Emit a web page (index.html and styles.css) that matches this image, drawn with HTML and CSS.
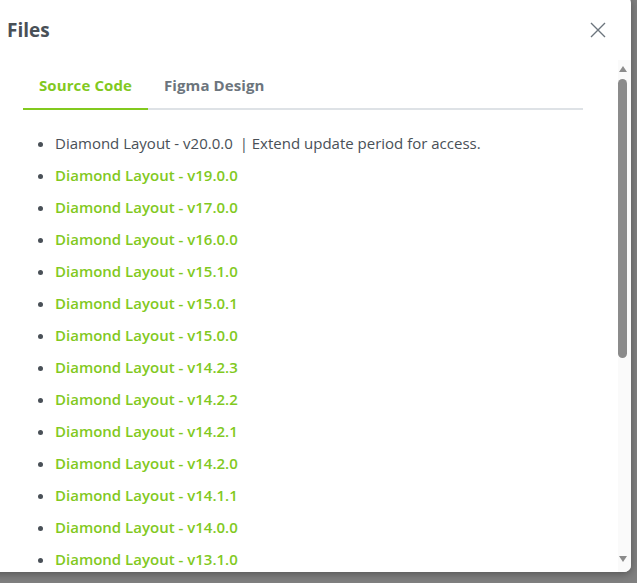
FILE: index.html
```html
<!DOCTYPE html>
<html lang="en">
<head>
    <meta charset="UTF-8">
    <meta name="viewport" content="width=device-width, initial-scale=1.0">
    <title>Files</title>
    <link rel="stylesheet" href="styles.css">
</head>
<body>
    <!-- Files dialog over the dimmed page -->
    <div class="dialog">
        <div class="dialog-header">
            <span class="dialog-title">Files</span>
            <button class="dialog-close" aria-label="Close">
                <svg width="16" height="16" viewBox="0 0 16 16">
                    <path d="M1 1 L15 15 M15 1 L1 15" stroke="#6c757d" stroke-width="1.4" fill="none"/>
                </svg>
            </button>
        </div>

        <div class="dialog-body">
            <div class="dialog-content">
                <div class="tabs">
                    <a class="tab active">Source Code</a>
                    <a class="tab">Figma Design</a>
                </div>

                <ul class="file-list">
                    <li class="muted">Diamond Layout - v20.0.0 <span class="sep">|</span> Extend update period for access.</li>
                    <li><a>Diamond Layout - v19.0.0</a></li>
                    <li><a>Diamond Layout - v17.0.0</a></li>
                    <li><a>Diamond Layout - v16.0.0</a></li>
                    <li><a>Diamond Layout - v15.1.0</a></li>
                    <li><a>Diamond Layout - v15.0.1</a></li>
                    <li><a>Diamond Layout - v15.0.0</a></li>
                    <li><a>Diamond Layout - v14.2.3</a></li>
                    <li><a>Diamond Layout - v14.2.2</a></li>
                    <li><a>Diamond Layout - v14.2.1</a></li>
                    <li><a>Diamond Layout - v14.2.0</a></li>
                    <li><a>Diamond Layout - v14.1.1</a></li>
                    <li><a>Diamond Layout - v14.0.0</a></li>
                    <li><a>Diamond Layout - v13.1.0</a></li>
                </ul>
            </div>

            <!-- scrollbar of the list -->
            <div class="scrollbar">
                <div class="scroll-arrow up"></div>
                <div class="scroll-track">
                    <div class="scroll-thumb"></div>
                </div>
                <div class="scroll-arrow down"></div>
            </div>
        </div>
    </div>
</body>
</html>
```

FILE: styles.css
```css
/* Base */
* {
    margin: 0;
    padding: 0;
    box-sizing: border-box;
}

body {
    height: 583px;
    overflow: hidden;
    background: #808080;
    font-family: "Open Sans", "Noto Sans", sans-serif;
    color: #495057;
}

/* Dialog box */
.dialog {
    display: flex;
    flex-direction: column;
    width: 643px;
    height: 576px;
    margin-top: -4px;
    margin-left: -12px;
    background: #fff;
    border-radius: 7px;
    overflow: hidden;
    box-shadow: 0 2px 8px rgba(0, 0, 0, 0.35);
}

.dialog-header {
    display: flex;
    justify-content: space-between;
    align-items: center;
    height: 64px;
    padding: 4px 17px 0 19px;
}

.dialog-title {
    font-size: 19px;
    font-weight: 700;
    color: #495057;
}

.dialog-close {
    display: flex;
    align-items: center;
    justify-content: center;
    width: 32px;
    height: 32px;
    border: none;
    background: transparent;
}

/* Body: list + scrollbar */
.dialog-body {
    display: flex;
    flex: 1;
    min-height: 0;
}

.dialog-content {
    flex: 1;
    overflow: hidden;
    padding: 0 35px;
}

.scrollbar {
    display: flex;
    flex-direction: column;
    width: 13px;
    background: #fafafa;
}

.scroll-arrow {
    height: 18px;
    display: flex;
    justify-content: center;
    align-items: center;
    padding-right: 4px;
}

.scroll-arrow::before {
    content: '';
    border-left: 4.5px solid transparent;
    border-right: 4.5px solid transparent;
}

.scroll-arrow.up::before {
    border-bottom: 6px solid #8b8b8b;
}

.scroll-arrow.down::before {
    border-top: 6px solid #8b8b8b;
    margin-bottom: 8px;
}

.scroll-track {
    flex: 1;
    padding: 1px 4px 0 0;
}

.scroll-thumb {
    height: 279px;
    background: #8b8b8b;
    border-radius: 5px;
}

/* Tabs */
.tabs {
    display: flex;
    border-bottom: 2px solid #dee2e6;
}

.tab {
    padding: 16px 16px 14px;
    margin-bottom: -2px;
    border-bottom: 2px solid transparent;
    font-size: 15px;
    font-weight: 700;
    line-height: 18px;
    letter-spacing: 0.1px;
    color: #6c757d;
}

.tab.active {
    color: #82c91e;
    border-bottom-color: #82c91e;
}

/* File list */
.file-list {
    margin-top: 22px;
    padding-left: 32px;
    font-size: 15px;
}

.file-list li {
    line-height: 22px;
    margin-bottom: 10px;
}

.file-list li::marker {
    color: #495057;
}

.file-list a {
    color: #82c91e;
    font-weight: 600;
}

.file-list .muted {
    color: #495057;
}

.sep {
    margin-left: 3px;
}
```
